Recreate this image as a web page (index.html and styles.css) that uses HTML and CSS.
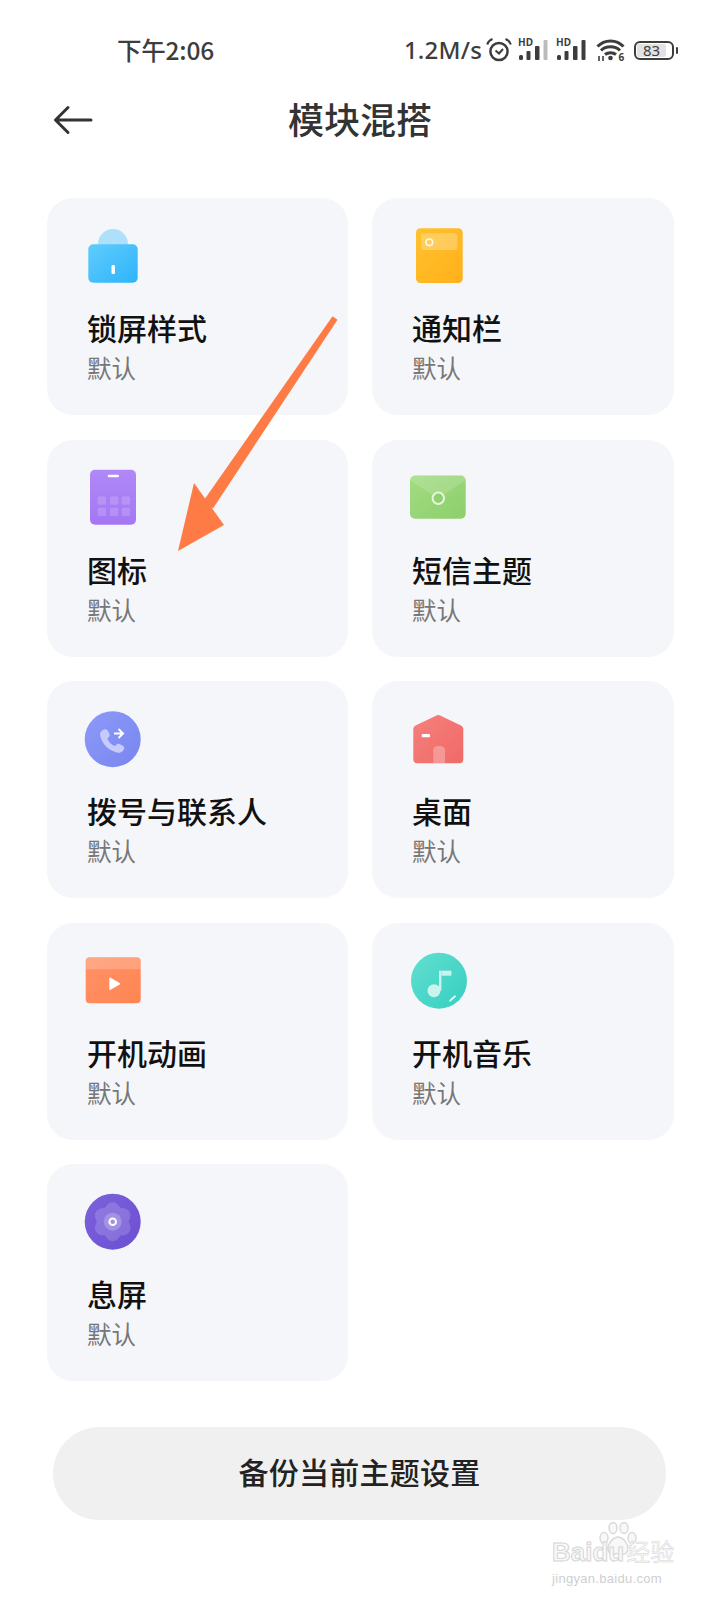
FILE: index.html
```html
<!DOCTYPE html>
<html lang="zh-CN">
<head>
<meta charset="utf-8">
<title>模块混搭</title>
<link rel="stylesheet" href="styles.css">
</head>
<body>
<div class="page">
  <div class="status">
    <span class="time">下午2:06</span>
    <div class="status-right">
      <span class="speed">1.2M/s</span>
      <svg class="alarm" width="26" height="26" viewBox="0 0 26 26"><circle cx="13" cy="14.500" r="8.600" fill="none" stroke="#3d3d3d" stroke-width="2.500"/><path d="M9.500 13.500l3.500 3 4-4.500" fill="none" stroke="#3d3d3d" stroke-width="2"/><path d="M1.200 7.500Q2.500 3.500 6.500 2M24.800 7.500Q23.500 3.500 19.500 2" fill="none" stroke="#3d3d3d" stroke-width="2.200"/></svg>
      <span class="sig">
        <span class="hd">HD</span>
        <svg width="33" height="20" viewBox="0 0 33 20"><rect x="1" y="15" width="4" height="5" rx="1.500" fill="#3d3d3d"/><rect x="8.500" y="11" width="4" height="9" rx="1" fill="#3d3d3d"/><rect x="17" y="6" width="4.500" height="14" rx="1" fill="#3d3d3d"/><rect x="25.500" y="0" width="4" height="20" rx="1" fill="#bbb"/></svg>
      </span>
      <span class="sig">
        <span class="hd">HD</span>
        <svg width="33" height="20" viewBox="0 0 33 20"><rect x="1" y="15" width="4" height="5" rx="1.500" fill="#3d3d3d"/><rect x="8.500" y="11" width="4" height="9" rx="1" fill="#3d3d3d"/><rect x="17" y="6" width="4.500" height="14" rx="1" fill="#3d3d3d"/><rect x="25.500" y="0" width="4" height="20" rx="1" fill="#3d3d3d"/></svg>
      </span>
      <svg class="wifi" width="30" height="24" viewBox="0 0 30 24"><path d="M1.500 8.500C8.500 1 20.500 1 27.500 8.500M5 12.500C10 7.500 19 7.500 24 12.500M9 16.500C12 14 17 14 20 16.500" fill="none" stroke="#3d3d3d" stroke-width="3"/><circle cx="14.500" cy="20" r="2.300" fill="#3d3d3d"/><path d="M3 18v5M7 18v5" stroke="#3d3d3d" stroke-width="1.600"/><text class="wifi-six" x="22.500" y="23">6</text></svg>
      <span class="batt"><span class="batt-body"><span class="batt-fill">83</span></span><span class="batt-tip"></span></span>
    </div>
  </div>

  <header class="head">
    <svg class="back" width="40" height="30" viewBox="0 0 40 30"><path d="M38 15H3M15 2.500L2.500 15 15 27.500" fill="none" stroke="#333" stroke-width="3" stroke-linecap="round" stroke-linejoin="round"/></svg>
    <h1 class="title">模块混搭</h1>
  </header>

  <main class="grid">
    <section class="card">
      <svg class="ic" width="80" height="80" viewBox="0 0 80 80">
        <defs>
          <linearGradient id="g1" x1="0" y1="0" x2="1" y2="1"><stop offset="0" stop-color="#5fcdfc"/><stop offset="1" stop-color="#2fb3fb"/></linearGradient>
          <linearGradient id="g2" x1="0" y1="0" x2="1" y2="1"><stop offset="0" stop-color="#ffc22e"/><stop offset="1" stop-color="#ffb01a"/></linearGradient>
          <linearGradient id="g3" x1="0" y1="0" x2="0" y2="1"><stop offset="0" stop-color="#b088f7"/><stop offset="1" stop-color="#a477f4"/></linearGradient>
          <linearGradient id="g4" x1="0" y1="0" x2="1" y2="1"><stop offset="0" stop-color="#a3dc82"/><stop offset="1" stop-color="#8ccf6c"/></linearGradient>
          <linearGradient id="g5" x1="0" y1="0" x2="1" y2="1"><stop offset="0" stop-color="#8e9af8"/><stop offset="1" stop-color="#7785f0"/></linearGradient>
          <linearGradient id="g6" x1="0" y1="0" x2="1" y2="1"><stop offset="0" stop-color="#f6807c"/><stop offset="1" stop-color="#f06a68"/></linearGradient>
          <linearGradient id="g7" x1="0" y1="0" x2="1" y2="1"><stop offset="0" stop-color="#ff9268"/><stop offset="1" stop-color="#ff8551"/></linearGradient>
          <linearGradient id="g8" x1="0" y1="0" x2="1" y2="1"><stop offset="0" stop-color="#62dfd0"/><stop offset="1" stop-color="#35cfc0"/></linearGradient>
          <linearGradient id="g9" x1="0" y1="0" x2="1" y2="1"><stop offset="0" stop-color="#7d62dc"/><stop offset="1" stop-color="#6b4fd2"/></linearGradient>
        </defs>
        <path d="M28 32v-3a15 15 0 0 1 30 0v3z" fill="#aedffb"/>
        <rect x="18.300" y="29.300" width="49.400" height="38.400" rx="5" fill="url(#g1)"/>
        <rect x="41.500" y="50" width="3.500" height="9" rx="1.200" fill="#fff"/>
      </svg>
      <div class="name">锁屏样式</div><div class="sub">默认</div>
    </section>

    <section class="card">
      <svg class="ic" width="80" height="80" viewBox="0 0 80 80">
        <rect x="21" y="13.300" width="46.700" height="54.700" rx="4.500" fill="url(#g2)"/>
        <rect x="26" y="18.300" width="36.300" height="16.700" rx="2" fill="#fff" opacity=".25"/>
        <circle cx="34.300" cy="27.300" r="3.300" fill="none" stroke="#fff" stroke-width="1.600" opacity=".85"/>
      </svg>
      <div class="name">通知栏</div><div class="sub">默认</div>
    </section>

    <section class="card">
      <svg class="ic" width="80" height="80" viewBox="0 0 80 80">
        <rect x="20" y="12.800" width="46" height="55" rx="5" fill="url(#g3)"/>
        <rect x="37.700" y="17.800" width="11.300" height="2.400" rx="1.200" fill="#fff"/>
        <g fill="#fff" opacity=".16">
          <rect x="27.700" y="39.500" width="8.300" height="8.300" rx="1"/><rect x="40" y="39.500" width="8.300" height="8.300" rx="1"/><rect x="51.700" y="39.500" width="8.300" height="8.300" rx="1"/>
          <rect x="27.700" y="50.800" width="8.300" height="8.300" rx="1"/><rect x="40" y="50.800" width="8.300" height="8.300" rx="1"/><rect x="51.700" y="50.800" width="8.300" height="8.300" rx="1"/>
        </g>
      </svg>
      <div class="name">图标</div><div class="sub">默认</div>
    </section>

    <section class="card">
      <svg class="ic" width="80" height="80" viewBox="0 0 80 80">
        <rect x="15" y="18.500" width="55.700" height="43.300" rx="5" fill="url(#g4)"/>
        <path d="M15 23.500q0-5 5-5h45.700q5 0 5 5L43 41z" fill="#fff" opacity=".14"/>
        <circle cx="43.300" cy="41.200" r="5.700" fill="#8fd06f" stroke="#e6f6dc" stroke-width="2"/>
      </svg>
      <div class="name">短信主题</div><div class="sub">默认</div>
    </section>

    <section class="card">
      <svg class="ic" width="80" height="80" viewBox="0 0 80 80">
        <circle cx="42.700" cy="41.200" r="28" fill="url(#g5)"/>
        <path d="M33 32c2-1.500 4-1 5 1l1.500 3c.6 1.400 0 2.600-1.300 3.500-.8.600-.9 1.200-.4 2.200 1.400 2.600 3.300 4.500 5.900 5.900 1 .5 1.600.4 2.200-.4 1-1.300 2.200-1.900 3.600-1.200l3 1.600c2 1 2.400 3 .8 4.800-2 2.200-4.600 2.800-7.500 1.800-8-2.700-13.500-8.300-15.500-16-.8-2.700.2-4.800 2.700-6.200z" fill="#c5cbfd"/>
        <path d="M44 35.500h8.500M48.500 31l4.500 4.500-4.500 4.500" fill="none" stroke="#fff" stroke-width="2"/>
      </svg>
      <div class="name">拨号与联系人</div><div class="sub">默认</div>
    </section>

    <section class="card">
      <svg class="ic" width="80" height="80" viewBox="0 0 80 80">
        <path d="M18.300 31q0-2.500 2.200-3.500L41.500 17.500q1.800-.8 3.600 0L66 27.500q2.300 1 2.300 3.500v30.300q0 4-4 4H22.300q-4 0-4-4z" fill="url(#g6)"/>
        <path d="M38.300 65.300V52q0-4 5.800-4t5.900 4v13.300z" fill="#fff" opacity=".28"/>
        <rect x="26.700" y="36" width="8.300" height="3.300" rx=".8" fill="#fff"/>
      </svg>
      <div class="name">桌面</div><div class="sub">默认</div>
    </section>

    <section class="card">
      <svg class="ic" width="80" height="80" viewBox="0 0 80 80">
        <rect x="15.700" y="17.300" width="55" height="46" rx="4" fill="url(#g7)"/>
        <path d="M15.700 29.300v-8q0-4 4-4h47q4 0 4 4v8z" fill="#fff" opacity=".2"/>
        <path d="M39.300 38.500q0-1.500 1.300-.8l9 5.200q1.200.8 0 1.600l-9 5.200q-1.300.7-1.300-.8z" fill="#fff"/>
      </svg>
      <div class="name">开机动画</div><div class="sub">默认</div>
    </section>

    <section class="card">
      <svg class="ic" width="80" height="80" viewBox="0 0 80 80">
        <circle cx="44" cy="40.700" r="28" fill="url(#g8)"/>
        <circle cx="39" cy="50.700" r="6.500" fill="#c9f3ee"/>
        <rect x="44" y="30.700" width="2.400" height="20" fill="#c9f3ee"/>
        <rect x="46.400" y="30.700" width="10" height="5" fill="#c9f3ee"/>
        <path d="M55 60.700L60 56.300" stroke="#e4faf7" stroke-width="1.800" stroke-linecap="round"/>
      </svg>
      <div class="name">开机音乐</div><div class="sub">默认</div>
    </section>

    <section class="card">
      <svg class="ic" width="80" height="80" viewBox="0 0 80 80">
        <circle cx="42.700" cy="40.700" r="28" fill="url(#g9)"/>
        <g fill="#fff" opacity=".16">
          <ellipse cx="42.700" cy="40.700" rx="11" ry="19.500"/>
          <ellipse cx="42.700" cy="40.700" rx="11" ry="19.500" transform="rotate(60 42.700 40.700)"/>
          <ellipse cx="42.700" cy="40.700" rx="11" ry="19.500" transform="rotate(120 42.700 40.700)"/>
        </g>
        <circle cx="42.700" cy="40.700" r="9" fill="#fff" opacity=".22"/>
        <circle cx="42.700" cy="40.700" r="3.300" fill="none" stroke="#fff" stroke-width="2"/>
      </svg>
      <div class="name">息屏</div><div class="sub">默认</div>
    </section>
  </main>

  <button class="backup">备份当前主题设置</button>

  <svg class="arrow" width="720" height="600" viewBox="0 0 720 600"><path d="M332.500 316.300L337.500 319.700 213 508.400 203 501.600z" fill="#ff7b45"/><path d="M178 551L194 483 224 525z" fill="#ff7b45"/></svg>

  <div class="mark">
    <svg class="paw" width="40" height="36" viewBox="0 0 40 36"><g fill="#f8f8f8" stroke="#dadada" stroke-width="1.500"><ellipse cx="6" cy="16" rx="4" ry="5.500"/><ellipse cx="15" cy="6" rx="4" ry="5.500"/><ellipse cx="26" cy="6" rx="4" ry="5.500"/><ellipse cx="34" cy="16" rx="4" ry="5.500"/><path d="M20 15c5 0 9 6 10 10 1 5-3 8-6 7-3-.8-5-.8-8 0-3 1-7-2-6-7 1-4 5-10 10-10z"/></g></svg>
    <span class="mark-logo">Baidu<span class="mark-cn">经验</span></span>
    <span class="mark-url">jingyan.baidu.com</span>
  </div>
</div>
</body>
</html>
```

FILE: styles.css
```css
* { box-sizing: border-box; }
html, body { margin: 0; padding: 0; background: #fff; }
body { font-family: "Noto Sans CJK SC", "Noto Sans", sans-serif; }
.page { position: relative; width: 720px; height: 1600px; overflow: hidden; }

.status { height: 68px; padding: 32px 42px 0 117px; display: flex; justify-content: space-between; align-items: center; color: #3d3d3d; }
.time { font-size: 24.5px; font-weight: 500; line-height: 36px; letter-spacing: -.2px; }
.status-right { display: flex; align-items: center; height: 36px; }
.speed { font-family: "Noto Sans", sans-serif; font-size: 24px; font-weight: 500; line-height: 36px; letter-spacing: .2px; margin-right: 4px; }
.alarm { margin-right: 6px; }
.sig { position: relative; display: block; width: 33px; height: 24px; margin-right: 5px; }
.sig svg { position: absolute; right: 0; bottom: 2px; }
.hd { position: absolute; left: 0; top: -1px; font-family: "Noto Sans", sans-serif; font-size: 10px; font-weight: 700; line-height: 11px; color: #3d3d3d; }
.wifi { margin: 0 8px 0 2px; overflow: visible; }
.wifi-six { font-family: "Noto Sans", sans-serif; font-size: 10px; font-weight: 700; fill: #3d3d3d; }
.batt { display: flex; align-items: center; }
.batt-body { display: block; width: 40px; height: 19px; border: 2px solid #3d3d3d; border-radius: 6px; padding: 1px; }
.batt-fill { display: block; width: 29px; height: 13px; background: #e2e2e2; border-radius: 2px; font-family: "Noto Sans", sans-serif; font-size: 15px; line-height: 13px; text-align: center; color: #3d3d3d; }
.batt-tip { display: block; width: 2px; height: 7px; background: #3d3d3d; margin-left: 2px; border-radius: 1px; }

.head { position: relative; height: 104px; padding-bottom: 4px; display: flex; align-items: center; justify-content: center; }
.back { position: absolute; left: 53px; top: 37px; }
.title { margin: 0; font-size: 36px; font-weight: 500; line-height: 48px; color: #333; }

.grid { margin-top: 26px; padding-left: 47px; display: grid; grid-template-columns: 301px 302px; grid-auto-rows: 217px; column-gap: 24px; row-gap: 24.5px; }
.card { background: #f5f6fa; border-radius: 26px; padding: 17px 0 0 40px; }
.ic { display: block; margin-left: -17px; }
.name { margin-top: 12px; font-size: 30px; font-weight: 500; line-height: 40px; color: #111; }
.sub { margin-top: 1px; font-size: 24.5px; line-height: 40px; color: #777; }

.backup { display: block; margin: 46px 0 0 53px; width: 613px; height: 93px; padding: 0 0 5px; border: 0; border-radius: 47px; background: #f0f0f0; font-family: inherit; font-size: 30px; font-weight: 500; color: #222; letter-spacing: .25px; }

.arrow { position: absolute; left: 0; top: 0; pointer-events: none; }

.mark { position: absolute; left: 552px; top: 1535px; width: 140px; display: flex; flex-direction: column; }
.paw { position: absolute; left: 46px; top: -13px; }
.mark-logo { position: relative; padding-top: 2px; font-family: "Liberation Sans", sans-serif; font-size: 26px; font-weight: 700; line-height: 28px; color: #f8f8f8; -webkit-text-stroke: 1px #d6d6d6; }
.mark-cn { font-family: "Noto Sans CJK SC", sans-serif; font-size: 24px; font-weight: 400; margin-left: 2px; -webkit-text-stroke: .5px #d6d6d6; }
.mark-url { margin-top: 6px; font-family: "Liberation Sans", sans-serif; font-size: 13px; line-height: 14px; letter-spacing: .3px; color: #cfcfcf; }
```
